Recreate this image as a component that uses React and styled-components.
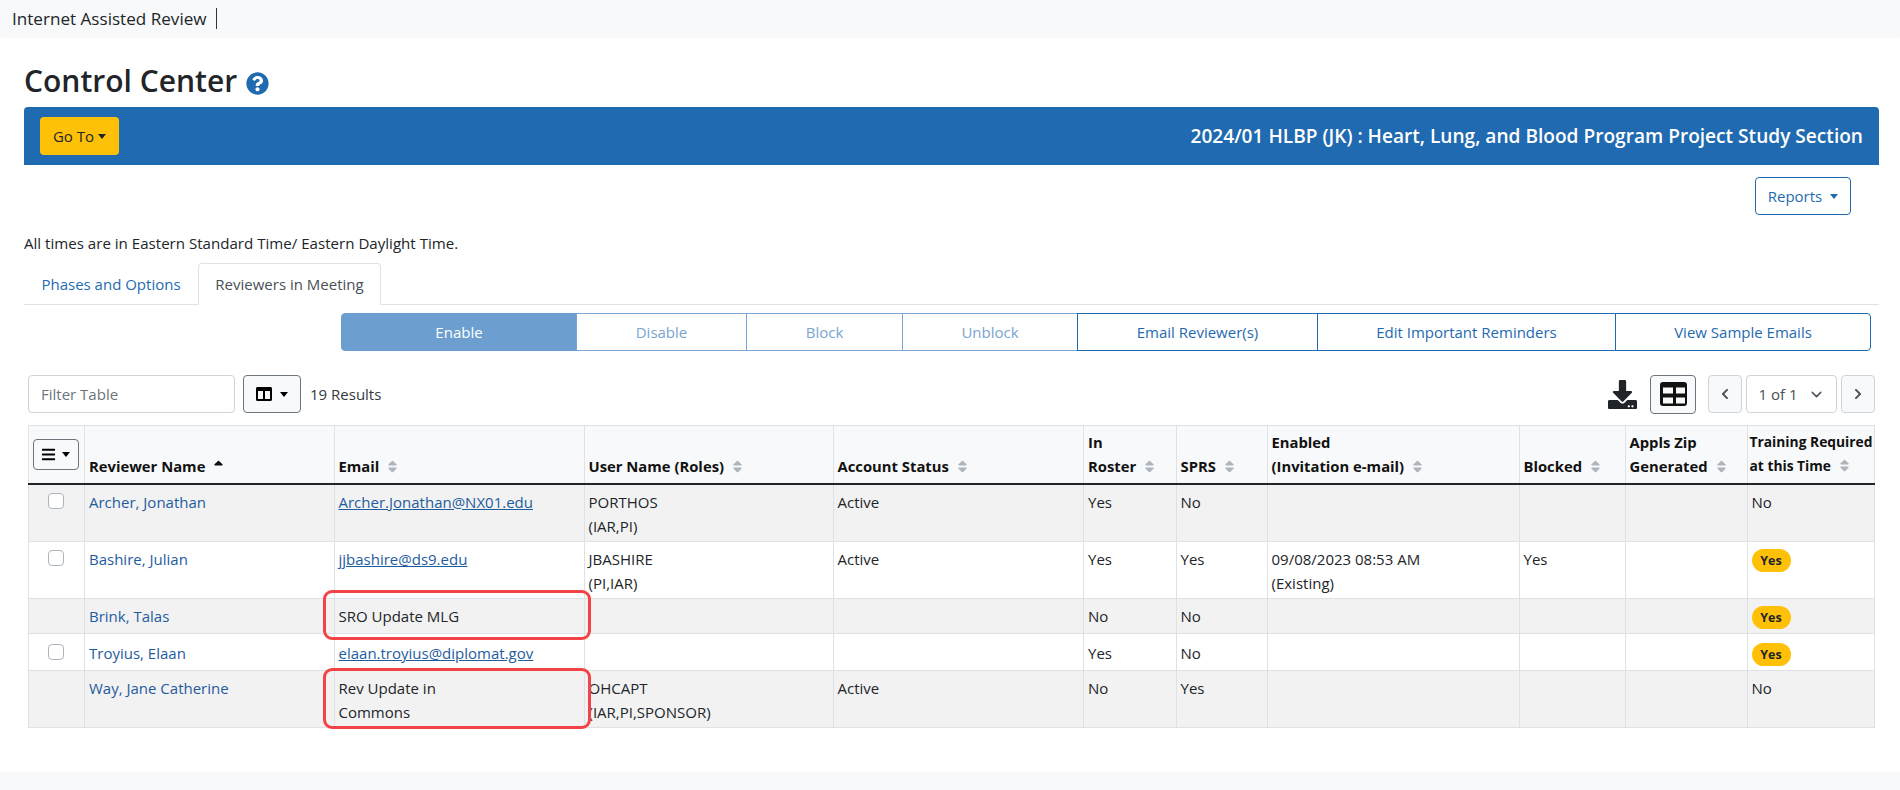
import React from 'react';
import styled, { createGlobalStyle } from 'styled-components';
import { FaBars, FaChevronLeft, FaChevronRight, FaColumns, FaDownload, FaQuestionCircle, FaSort, FaSortUp } from 'react-icons/fa';
import { FiChevronDown } from 'react-icons/fi';

const BLUE = '#1f6ab0';
const LINK = '#1f5c9e';

const GlobalStyle = createGlobalStyle`
  html, body {
    margin: 0;
    padding: 0;
    background: #fff;
    color: #212529;
    font-family: "Open Sans", "Noto Sans", sans-serif;
    font-size: 15px;
    line-height: 24px;
  }
  * { box-sizing: border-box; }
`;

const Page = styled.div`
  min-height: 100vh;
  display: flex;
  flex-direction: column;
`;

const Navbar = styled.header`
  height: 36px;
  display: flex;
  align-items: center;
  padding-left: 12px;
  background: #f8f9fa;
  box-shadow: 0 1px 3px rgba(0, 0, 0, 0.05);
`;

const Brand = styled.span`
  padding-right: 9px;
  font-size: 17.1px;
  color: #212529;
  border-right: 1px solid #333;
  line-height: 21px;
`;

const Main = styled.main`
  padding: 0 21px 0 24px;
`;

const Title = styled.h1`
  display: flex;
  align-items: center;
  gap: 9px;
  margin: 26px 0 7px;
  font-size: 30px;
  line-height: 38px;
  font-weight: 600;
  color: #212529;
  svg { color: ${BLUE}; font-size: 23px; margin-top: 4px; }
`;

const Banner = styled.div`
  height: 58px;
  display: flex;
  align-items: center;
  justify-content: space-between;
  padding: 0 16px;
  background: ${BLUE};
  border-radius: 4px 4px 0 0;
`;

const BannerTitle = styled.div`
  color: #fff;
  font-size: 19.1px;
  font-weight: 600;
`;

const Caret = styled.span`
  display: inline-block;
  border-top: 5px solid currentColor;
  border-left: 4.5px solid transparent;
  border-right: 4.5px solid transparent;
  margin-left: ${(p) => p.$gap || 4}px;
  vertical-align: 3px;
`;

const GoTo = styled.button`
  width: 79px;
  height: 38px;
  padding: 0;
  border: 0;
  border-radius: 4px;
  background: #ffc107;
  color: #212529;
  font: inherit;
`;

const ReportsRow = styled.div`
  display: flex;
  justify-content: flex-end;
  margin-top: 12px;
  padding-right: 28px;
`;

const Reports = styled.button`
  width: 96px;
  height: 38px;
  padding: 0;
  background: #fff;
  border: 1px solid ${BLUE};
  border-radius: 4px;
  color: ${BLUE};
  font: inherit;
`;

const TimeNote = styled.p`
  margin: 16px 0 8px;
  font-size: 15.1px;
`;

const Tabs = styled.nav`
  display: flex;
  height: 42px;
  border-bottom: 1px solid #dee2e6;
`;

const Tab = styled.a`
  width: ${(p) => p.$width}px;
  height: ${(p) => (p.$active ? 42 : 41)}px;
  display: flex;
  align-items: center;
  justify-content: center;
  color: ${(p) => (p.$active ? '#495057' : BLUE)};
  background: #fff;
  border: 1px solid ${(p) => (p.$active ? '#dee2e6' : 'transparent')};
  border-bottom-color: ${(p) => (p.$active ? '#fff' : 'transparent')};
  border-radius: 4px 4px 0 0;
`;

const Actions = styled.div`
  display: flex;
  justify-content: flex-end;
  margin: 8px 8px 0 0;
`;

const ActionButton = styled.button`
  width: ${(p) => p.$width}px;
  height: 38px;
  padding: 0;
  margin-left: -1px;
  font: inherit;
  background: ${(p) => (p.$filled ? '#6c9fcf' : '#fff')};
  color: ${(p) => (p.$filled ? '#fff' : p.$muted ? '#79a5d0' : BLUE)};
  border: 1px solid ${(p) => (p.$filled ? '#6c9fcf' : p.$muted ? '#79a5d0' : BLUE)};
  &:first-child { border-radius: 4px 0 0 4px; }
  &:last-child { border-radius: 0 4px 4px 0; }
`;

const Toolbar = styled.div`
  display: flex;
  align-items: center;
  height: 38px;
  margin: 24px 4px 0 4px;
`;

const FilterInput = styled.input`
  width: 207px;
  height: 38px;
  padding: 0 12px;
  border: 1px solid #ced4da;
  border-radius: 4px;
  font: inherit;
  &::placeholder { color: #6c757d; opacity: 1; }
`;

const ColumnsButton = styled.button`
  width: 58px;
  height: 38px;
  display: flex;
  align-items: center;
  justify-content: center;
  margin-left: 8px;
  padding: 0;
  flex: none;
  background: #f8f9fa;
  border: 1px solid #6c757d;
  border-radius: 4px;
  color: #000;
  font: inherit;
`;

const ViewButton = styled(ColumnsButton)`
  width: 46px;
  height: 39px;
  margin-left: 0;
`;

const MenuButton = styled(ColumnsButton)`
  width: 46px;
  height: 31px;
  margin-left: 0;
  && svg { color: #000; margin: 0; vertical-align: baseline; font-size: 15px; }
`;

const ResultCount = styled.span`
  margin-left: 9px;
  color: #343a40;
`;

const ToolbarRight = styled.div`
  display: flex;
  align-items: center;
  margin-left: auto;
`;

const DownloadIcon = styled(FaDownload)`
  width: 29px;
  height: 29px;
  color: #212529;
  margin-right: 13px;
`;

const PagerButton = styled.button`
  width: 34px;
  height: 38px;
  display: flex;
  align-items: center;
  justify-content: center;
  padding: 0;
  margin-left: ${(p) => p.$gap}px;
  background: #f8f9fa;
  border: 1px solid #ced4da;
  border-radius: 4px;
  color: #495057;
  font-size: 12px;
`;

const PagerSelect = styled.div`
  width: 91px;
  height: 38px;
  display: flex;
  align-items: center;
  justify-content: center;
  gap: 10px;
  margin-left: 4px;
  border: 1px solid #ced4da;
  border-radius: 4px;
  color: #495057;
  svg { font-size: 17px; }
`;

const TableWrap = styled.div`
  position: relative;
  margin: 12px 4px 0 3.5px;
`;

const Grid = styled.table`
  width: 1846px;
  table-layout: fixed;
  border-collapse: collapse;
  color: #212529;
`;

const HeadCell = styled.th`
  padding: 0 ${(p) => (p.$tight ? 0 : 4)}px 5px ${(p) => (p.$tight ? 2 : 4)}px;
  height: 58px;
  text-align: left;
  vertical-align: bottom;
  white-space: nowrap;
  font-weight: 700;
  font-size: ${(p) => (p.$tight ? 13.8 : 14.8)}px;
  color: #111;
  background: #f8f9fa;
  border: 1px solid #dee2e6;
  border-bottom: 2px solid #212529;
  svg { font-size: 15px; margin-left: 6px; vertical-align: -2px; color: #adb5bd; }
`;

const SortUp = styled(FaSortUp)`
  && { color: #111; }
`;

const MenuSlot = styled.div`
  display: flex;
  margin: 0 0 8px 0;
`;

const Row = styled.tr`
  height: ${(p) => p.$height}px;
  background: ${(p) => (p.$odd ? '#f2f2f2' : '#fff')};
`;

const Cell = styled.td`
  padding: ${(p) => p.$top || 5}px 4px 0;
  vertical-align: top;
  overflow: visible;
  white-space: nowrap;
  border: 1px solid #dee2e6;
  a { color: ${LINK}; }
`;

const NameLink = styled.a`
  text-decoration: none;
`;

const Check = styled.input`
  appearance: none;
  display: block;
  width: 16px;
  height: 16px;
  margin: 3px auto 0;
  background: #fff;
  border: 1px solid #adb5bd;
  border-radius: 4px;
`;

const Badge = styled.span`
  display: inline-block;
  width: 39px;
  height: 23px;
  line-height: 23px;
  text-align: center;
  font-size: 12.5px;
  font-weight: 700;
  color: #212529;
  background: #ffc107;
  border-radius: 12px;
`;

const Callout = styled.div`
  position: absolute;
  left: 295px;
  top: ${(p) => p.$top}px;
  width: 268px;
  height: ${(p) => p.$height}px;
  border: 3px solid #f44347;
  border-radius: 9px;
  pointer-events: none;
`;

const Footer = styled.footer`
  height: 18px;
  margin-top: auto;
  background: #f8f9fa;
`;

const columns = [
  { width: 56.5 },
  { width: 249.5, label: ['Reviewer Name'], up: true },
  { width: 250, label: ['Email'] },
  { width: 249, label: ['User Name (Roles)'] },
  { width: 250.5, label: ['Account Status'] },
  { width: 92.5, label: ['In', 'Roster'] },
  { width: 91, label: ['SPRS'] },
  { width: 252, label: ['Enabled', '(Invitation e-mail)'] },
  { width: 106, label: ['Blocked'] },
  { width: 122, label: ['Appls Zip', 'Generated'] },
  { width: 127, label: ['Training Required', 'at this Time'], tight: true },
];

const rows = [
  { height: 58, check: true, name: 'Archer, Jonathan', email: 'Archer.Jonathan@NX01.edu', user: ['PORTHOS', '(IAR,PI)'], status: 'Active', roster: 'Yes', sprs: 'No', training: 'No' },
  { height: 57, check: true, name: 'Bashire, Julian', email: 'jjbashire@ds9.edu', user: ['JBASHIRE', '(PI,IAR)'], status: 'Active', roster: 'Yes', sprs: 'Yes', enabled: ['09/08/2023 08:53 AM', '(Existing)'], blocked: 'Yes', training: 'Yes' },
  { height: 35, name: 'Brink, Talas', note: ['SRO Update MLG'], roster: 'No', sprs: 'No', training: 'Yes' },
  { height: 37, top: 7, check: true, name: 'Troyius, Elaan', email: 'elaan.troyius@diplomat.gov', roster: 'Yes', sprs: 'No', training: 'Yes' },
  { height: 57, name: 'Way, Jane Catherine', note: ['Rev Update in', 'Commons'], user: ['OHCAPT', '(IAR,PI,SPONSOR)'], status: 'Active', roster: 'No', sprs: 'Yes', training: 'No' },
];

const Lines = ({ items = [] }) => items.map((line) => <div key={line}>{line}</div>);

const TableIcon = () => (
  <svg width="27" height="24" viewBox="0 0 27 24">
    <rect width="27" height="24" rx="3" fill="#111" />
    <rect x="3" y="5.5" width="10" height="6" fill="#f8f9fa" />
    <rect x="16" y="5.5" width="9" height="6" fill="#f8f9fa" />
    <rect x="3" y="15.5" width="10" height="6" fill="#f8f9fa" />
    <rect x="16" y="15.5" width="9" height="6" fill="#f8f9fa" />
  </svg>
);

const App = () => (
  <Page>
    <GlobalStyle />
    <Navbar>
      <Brand>Internet Assisted Review</Brand>
    </Navbar>
    <Main>
      <Title>
        Control Center <FaQuestionCircle />
      </Title>
      <Banner>
        <GoTo>
          Go To<Caret />
        </GoTo>
        <BannerTitle>2024/01 HLBP (JK) : Heart, Lung, and Blood Program Project Study Section</BannerTitle>
      </Banner>
      <ReportsRow>
        <Reports>
          Reports<Caret $gap={8} />
        </Reports>
      </ReportsRow>
      <TimeNote>All times are in Eastern Standard Time/ Eastern Daylight Time.</TimeNote>
      <Tabs>
        <Tab $width={174}>Phases and Options</Tab>
        <Tab $width={183} $active>Reviewers in Meeting</Tab>
      </Tabs>
      <Actions>
        <ActionButton $width={236} $filled>Enable</ActionButton>
        <ActionButton $width={171} $muted>Disable</ActionButton>
        <ActionButton $width={157} $muted>Block</ActionButton>
        <ActionButton $width={176} $muted>Unblock</ActionButton>
        <ActionButton $width={241}>Email Reviewer(s)</ActionButton>
        <ActionButton $width={299}>Edit Important Reminders</ActionButton>
        <ActionButton $width={256}>View Sample Emails</ActionButton>
      </Actions>
      <Toolbar>
        <FilterInput placeholder="Filter Table" />
        <ColumnsButton>
          <FaColumns size={16} />
          <Caret $gap={8} />
        </ColumnsButton>
        <ResultCount>19 Results</ResultCount>
        <ToolbarRight>
          <DownloadIcon />
          <ViewButton>
            <TableIcon />
          </ViewButton>
          <PagerButton $gap={12}><FaChevronLeft /></PagerButton>
          <PagerSelect>1 of 1 <FiChevronDown /></PagerSelect>
          <PagerButton $gap={4}><FaChevronRight /></PagerButton>
        </ToolbarRight>
      </Toolbar>
      <TableWrap>
        <Grid>
          <colgroup>
            {columns.map((col, i) => <col key={i} width={col.width} />)}
          </colgroup>
          <thead>
            <tr>
              {columns.map((col, i) => (
                <HeadCell key={i} $tight={col.tight}>
                  {col.label ? (
                    <>
                      {col.label.slice(0, -1).map((line) => <div key={line}>{line}</div>)}
                      {col.label[col.label.length - 1]}
                      {col.up ? <SortUp /> : <FaSort />}
                    </>
                  ) : (
                    <MenuSlot>
                      <MenuButton>
                        <FaBars />
                        <Caret $gap={6} />
                      </MenuButton>
                    </MenuSlot>
                  )}
                </HeadCell>
              ))}
            </tr>
          </thead>
          <tbody>
            {rows.map((row, i) => (
              <Row key={row.name} $height={row.height} $odd={i % 2 === 0}>
                <Cell $top={row.top}>{row.check && <Check type="checkbox" />}</Cell>
                <Cell $top={row.top}><NameLink>{row.name}</NameLink></Cell>
                <Cell $top={row.top}>
                  {row.email ? <a href="#mail">{row.email}</a> : <Lines items={row.note} />}
                </Cell>
                <Cell $top={row.top}><Lines items={row.user} /></Cell>
                <Cell $top={row.top}>{row.status}</Cell>
                <Cell $top={row.top}>{row.roster}</Cell>
                <Cell $top={row.top}>{row.sprs}</Cell>
                <Cell $top={row.top}><Lines items={row.enabled} /></Cell>
                <Cell $top={row.top}>{row.blocked}</Cell>
                <Cell $top={row.top} />
                <Cell $top={row.top}>
                  {row.training === 'Yes' ? <Badge>Yes</Badge> : row.training}
                </Cell>
              </Row>
            ))}
          </tbody>
        </Grid>
        <Callout $top={165} $height={50} />
        <Callout $top={243} $height={61} />
      </TableWrap>
    </Main>
    <Footer />
  </Page>
);

export default App;
